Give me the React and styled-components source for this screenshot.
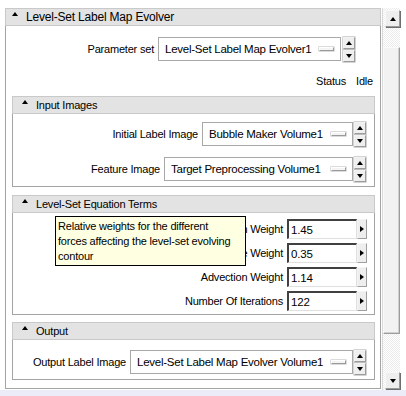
import React from "react";
import styled, { createGlobalStyle } from "styled-components";

const Global = createGlobalStyle`
  html, body { margin: 0; padding: 0; background: #ffffff; }
  body { font-family: "Liberation Sans", Arial, sans-serif; font-size: 11px; color: #000; letter-spacing: -0.2px; }
  * { box-sizing: border-box; }
`;

const Page = styled.div`
  width: 406px;
  height: 396px;
  display: flex;
  flex-direction: column;
  overflow: hidden;
  background: #ffffff;
`;

const Top = styled.div`
  height: 390px;
  display: flex;
  padding: 8px 0 0 5px;
  gap: 1px;
`;

const BottomStrip = styled.div`
  height: 6px;
  background: #ececf8;
`;

const Panel = styled.div`
  width: 376px;
  height: 381px;
  display: flex;
  flex-direction: column;
`;

const Header = styled.div`
  height: 18px;
  flex: none;
  display: flex;
  align-items: center;
  background: #e3e3e3;
  border: 1px solid #c9c9c9;
  padding-left: ${(p) => p.$indent || 5}px;
  font-size: ${(p) => (p.$big ? 12 : 11)}px;
  line-height: 14px;
`;

const Caret = styled.span`
  width: 0;
  height: 0;
  border-left: 3.5px solid transparent;
  border-right: 3.5px solid transparent;
  border-bottom: 4px solid #000;
  margin: -6px 8px 0 0;
`;

const Body = styled.div`
  border: 1px solid #a4a4a4;
  border-top: none;
  background: #fff;
  display: flex;
  flex-direction: column;
  position: relative;
  padding: ${(p) => p.$pad};
  gap: ${(p) => p.$gap || 0}px;
`;

const OuterBody = styled(Body)`
  flex: 1;
`;

const Section = styled.section`
  margin-top: ${(p) => p.$mt}px;
  display: flex;
  flex-direction: column;
`;

const Row = styled.div`
  display: flex;
  justify-content: flex-end;
  align-items: center;
  height: ${(p) => p.$h || 24}px;
  margin-top: ${(p) => p.$mt || 0}px;
  padding-right: ${(p) => p.$pr || 0}px;
  gap: ${(p) => p.$gap ?? 0}px;
`;

const Label = styled.span`
  margin-right: 4px;
  white-space: nowrap;
  line-height: 14px;
`;

const Combo = styled.div`
  width: ${(p) => p.$w}px;
  height: 24px;
  border: 1px solid #a8a8a8;
  background: #fff;
  display: flex;
  align-items: center;
  justify-content: space-between;
  padding: 0 6px 0 6px;
  white-space: nowrap;
  font-size: 11.5px;
  letter-spacing: -0.25px;
`;

const Indicator = styled.span`
  width: 15px;
  height: 4px;
  flex: none;
  border: 1px solid #9a9a9a;
  border-top-color: #fff;
  border-left-color: #fff;
  box-shadow: 0 0 0 0.5px #b8b8b8;
  background: #f4f4f4;
`;

const SpinCol = styled.div`
  display: flex;
  flex-direction: column;
  width: 12px;
  height: 25px;
  margin-left: ${(p) => p.$ml ?? 1}px;
  gap: 1px;
`;

const SpinBtn = styled.div`
  flex: 1;
  border: 1px solid #9c9c9c;
  border-top-color: #f2f2f2;
  border-left-color: #f2f2f2;
  box-shadow: 0 0 0 0.5px #a8a8a8;
  background: #efefef;
  display: flex;
  align-items: center;
  justify-content: center;
`;

const Tri = styled.span`
  width: 0;
  height: 0;
  border-left: 3px solid transparent;
  border-right: 3px solid transparent;
  ${(p) =>
    p.$dir === "up"
      ? "border-bottom: 4px solid #000;"
      : "border-top: 4px solid #000;"}
`;

const RightTri = styled.span`
  width: 0;
  height: 0;
  border-top: 3.5px solid transparent;
  border-bottom: 3.5px solid transparent;
  border-left: 4px solid #000;
`;

const Field = styled.div`
  width: 70px;
  height: 20px;
  background: #fff;
  border: 1px solid #e0e0e0;
  border-top: 2px solid #404040;
  border-left: 2px solid #404040;
  display: flex;
  align-items: center;
  padding-left: 2px;
  font-size: 11.5px;
`;

const ArrowBtn = styled.div`
  width: 10px;
  height: 20px;
  border: 1px solid #a0a0a0;
  border-top-color: #f4f4f4;
  border-left-color: #f4f4f4;
  background: #eeeeee;
  display: flex;
  align-items: center;
  justify-content: center;
`;

const StatusText = styled.span`
  line-height: 14px;
`;

const Tooltip = styled.div`
  position: absolute;
  left: 42px;
  top: 3px;
  width: 191px;
  height: 50px;
  background: #ffffe1;
  border: 1px solid #000;
  padding: 2px 2px 0 2px;
  line-height: 15px;
  font-size: 11px;
  z-index: 2;
`;

const Scrollbar = styled.div`
  width: 18px;
  height: 382px;
  display: flex;
  flex-direction: column;
  border-left: 1px solid #d8d8d8;
  background: repeating-conic-gradient(#ececec 0 25%, #ffffff 0 50%) 0 0 / 2px 2px;
`;

const ScrollBtn = styled.div`
  height: 17px;
  margin: ${(p) => (p.$bottom ? "0 0 1px 2px" : "2px 0 0 2px")};
  border: 1px solid #9a9a9a;
  border-top-color: #f8f8f8;
  border-left-color: #f8f8f8;
  box-shadow: 1px 1px 0 #6e6e6e;
  background: #eeeeee;
  display: flex;
  align-items: center;
  justify-content: center;
`;

const Track = styled.div`
  flex: 1;
  display: flex;
  flex-direction: column;
`;

const Thumb = styled.div`
  margin-top: 20px;
  height: 287px;
  border: 1px solid #9c9c9c;
  border-top-color: #fafafa;
  border-left-color: #fafafa;
  box-shadow: inset -1px -1px 0 #d0d0d0;
  background: #f2f2f2;
`;

function Spinner({ ml }) {
  return (
    <SpinCol $ml={ml}>
      <SpinBtn>
        <Tri $dir="up" />
      </SpinBtn>
      <SpinBtn>
        <Tri $dir="down" />
      </SpinBtn>
    </SpinCol>
  );
}

function ComboRow({ label, value, w, pr = 8, mt, ml }) {
  return (
    <Row $pr={pr} $mt={mt}>
      <Label>{label}</Label>
      <Combo $w={w}>
        <span>{value}</span>
        <Indicator />
      </Combo>
      <Spinner ml={ml} />
    </Row>
  );
}

function FieldRow({ label, value }) {
  return (
    <Row $h={20} $pr={7}>
      <Label>{label}</Label>
      <Field>{value}</Field>
      <ArrowBtn>
        <RightTri />
      </ArrowBtn>
    </Row>
  );
}

export default function App() {
  return (
    <>
      <Global />
      <Page>
        <Top>
          <Panel>
            <Header $big $indent={6}>
              <Caret />
              Level-Set Label Map Evolver
            </Header>
            <OuterBody $pad="0 5px 5px 6px">
              <ComboRow
                label="Parameter set"
                value="Level-Set Label Map Evolver1"
                w={183}
                pr={20}
                mt={11}
                ml={2}
              />
              <Row $h={14} $mt={13} $pr={2} $gap={10}>
                <StatusText>Status</StatusText>
                <StatusText>Idle</StatusText>
              </Row>

              <Section $mt={8}>
                <Header $indent={9}>
                  <Caret />
                  Input Images
                </Header>
                <Body $pad="8px 0 5px 0" $gap={11}>
                  <ComboRow
                    label="Initial Label Image"
                    value="Bubble Maker Volume1"
                    w={151}
                  />
                  <ComboRow
                    label="Feature Image"
                    value="Target Preprocessing Volume1"
                    w={189}
                  />
                </Body>
              </Section>

              <Section $mt={8}>
                <Header $indent={9}>
                  <Caret />
                  Level-Set Equation Terms
                </Header>
                <Body $pad="6px 0 3px 0" $gap={4}>
                  <FieldRow label="Propagation Weight" value="1.45" />
                  <FieldRow label="Curvature Weight" value="0.35" />
                  <FieldRow label="Advection Weight" value="1.14" />
                  <FieldRow label="Number Of Iterations" value="122" />
                  <Tooltip>
                    Relative weights for the different
                    <br />
                    forces affecting the level-set evolving
                    <br />
                    contour
                  </Tooltip>
                </Body>
              </Section>

              <Section $mt={7}>
                <Header $indent={9}>
                  <Caret />
                  Output
                </Header>
                <Body $pad="10px 0 5px 0">
                  <ComboRow
                    label="Output Label Image"
                    value="Level-Set Label Map Evolver Volume1"
                    w={223}
                  />
                </Body>
              </Section>
            </OuterBody>
          </Panel>
          <Scrollbar>
            <ScrollBtn>
              <Tri $dir="up" />
            </ScrollBtn>
            <Track>
              <Thumb />
            </Track>
            <ScrollBtn $bottom>
              <Tri $dir="down" />
            </ScrollBtn>
          </Scrollbar>
        </Top>
        <BottomStrip />
      </Page>
    </>
  );
}
